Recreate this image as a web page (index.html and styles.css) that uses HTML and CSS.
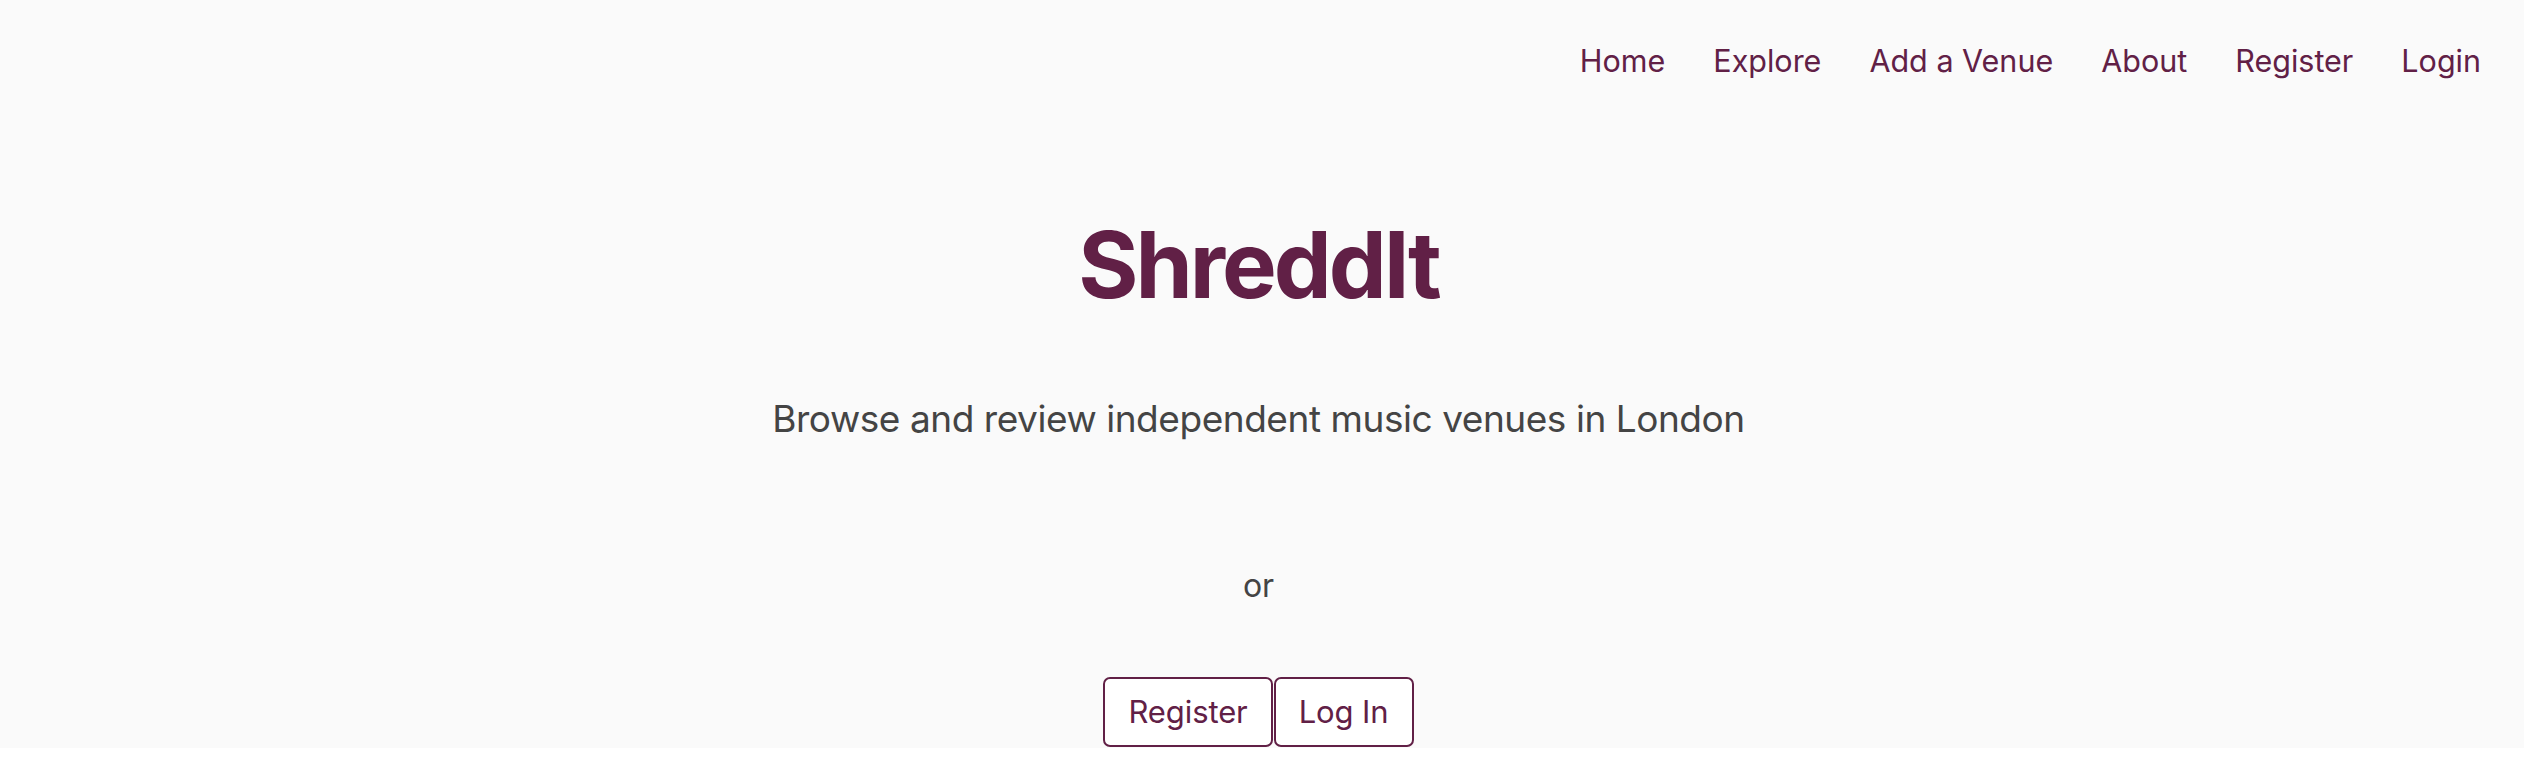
FILE: index.html
```html
<!DOCTYPE html>
<html lang="en">
<head>
<meta charset="utf-8">
<title>ShreddIt</title>
<link rel="stylesheet" href="styles.css">
</head>
<body>
<div class="page">
  <header class="topbar">
    <nav class="nav">
      <a class="nav-link" href="#">Home</a>
      <a class="nav-link" href="#">Explore</a>
      <a class="nav-link" href="#">Add a Venue</a>
      <a class="nav-link" href="#">About</a>
      <a class="nav-link" href="#">Register</a>
      <a class="nav-link" href="#">Login</a>
    </nav>
  </header>
  <main class="hero">
    <h1 class="title">ShreddIt</h1>
    <p class="tagline">Browse and review independent music venues in London</p>
    <p class="or">or</p>
    <div class="actions">
      <a class="btn" href="#">Register</a>
      <a class="btn" href="#">Log In</a>
    </div>
  </main>
</div>
</body>
</html>
```
FILE: styles.css
```css
* { box-sizing: border-box; }
html, body { margin: 0; padding: 0; background: #ffffff; }
body { font-family: Inter, "Noto Sans", "Liberation Sans", sans-serif; }
.page { background: #fafafa; }
.topbar { display: flex; justify-content: flex-end; padding: 41px 43px 0 0; height: 90px; }
.nav { display: flex; gap: 48px; align-items: flex-start; }
.nav-link { color: #612046; text-decoration: none; font-size: 30.5px; line-height: 40px; }
.hero { display: flex; flex-direction: column; align-items: center; padding: 0 7px 1px 0; }
.title { margin: 120px 0 0 0; font-size: 92px; line-height: 110px; font-weight: 700; color: #612046; letter-spacing: -3px; }
.tagline { margin: 76px 0 0 0; font-size: 37px; line-height: 46px; color: #444444; letter-spacing: -0.45px; }
.or { margin: 124px 0 0 0; font-size: 32px; line-height: 40px; color: #444444; }
.actions { display: flex; gap: 1px; margin-top: 71px; }
.btn { display: block; height: 70px; padding: 0 23px; border: 2px solid #612046; border-radius: 7px; background: #ffffff; color: #612046; text-decoration: none; font-size: 31px; line-height: 66px; letter-spacing: -0.1px; }
```
